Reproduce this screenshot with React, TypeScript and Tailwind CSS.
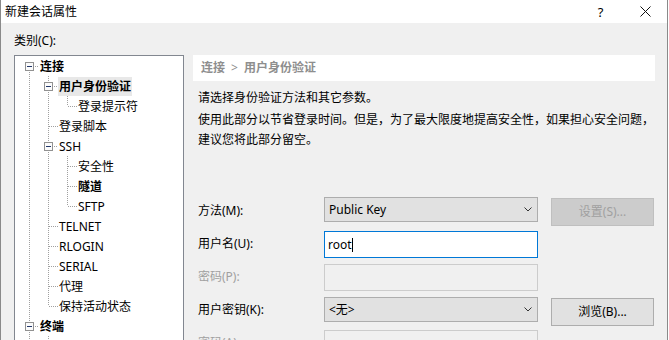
import React from 'react';

type Conn = 'F' | 'T' | 'L';
interface Row {
  guides: ('I' | ' ')[];
  conn: Conn;
  box?: boolean;
  text: string;
  bold?: boolean;
  sel?: boolean;
}

const rows: Row[] = [
  { guides: [], conn: 'F', box: true, text: '连接', bold: true },
  { guides: ['I'], conn: 'T', box: true, text: '用户身份验证', bold: true, sel: true },
  { guides: ['I', 'I'], conn: 'L', text: '登录提示符' },
  { guides: ['I'], conn: 'T', text: '登录脚本' },
  { guides: ['I'], conn: 'T', box: true, text: 'SSH' },
  { guides: ['I', 'I'], conn: 'T', text: '安全性' },
  { guides: ['I', 'I'], conn: 'T', text: '隧道', bold: true },
  { guides: ['I', 'I'], conn: 'L', text: 'SFTP' },
  { guides: ['I'], conn: 'T', text: 'TELNET' },
  { guides: ['I'], conn: 'T', text: 'RLOGIN' },
  { guides: ['I'], conn: 'T', text: 'SERIAL' },
  { guides: ['I'], conn: 'T', text: '代理' },
  { guides: ['I'], conn: 'L', text: '保持活动状态' },
  { guides: [], conn: 'T', box: true, text: '终端', bold: true },
  { guides: ['I'], conn: 'T', text: '' },
];

const DOT = '#a0a0a0';

function Guide({ kind }: { kind: 'I' | ' ' }) {
  return (
    <svg width="19" height="20" className="block shrink-0" shapeRendering="crispEdges">
      {kind === 'I' && (
        <line x1="9.5" y1="0" x2="9.5" y2="20" stroke={DOT} strokeDasharray="1 1" />
      )}
    </svg>
  );
}

function Connector({ conn, box }: { conn: Conn; box?: boolean }) {
  return (
    <svg width="19" height="20" className="block shrink-0" shapeRendering="crispEdges">
      {conn !== 'F' && <line x1="9.5" y1="0" x2="9.5" y2="10" stroke={DOT} strokeDasharray="1 1" />}
      {conn !== 'L' && <line x1="9.5" y1="10" x2="9.5" y2="20" stroke={DOT} strokeDasharray="1 1" />}
      <line x1={box ? 15 : 10} y1="10.5" x2="19" y2="10.5" stroke={DOT} strokeDasharray="1 1" />
      {box && (
        <>
          <rect x="5.5" y="6.5" width="8" height="8" fill="#fbfbfb" stroke="#919191" />
          <line x1="7" y1="10.5" x2="12" y2="10.5" stroke="#23386b" />
        </>
      )}
    </svg>
  );
}

function Chevron() {
  return (
    <svg width="8" height="5" className="block shrink-0" shapeRendering="geometricPrecision">
      <polyline points="0.5,0.5 4,4 7.5,0.5" fill="none" stroke="#333" strokeWidth="1" />
    </svg>
  );
}

export default function App() {
  return (
    <div className="w-[669px] h-[340px] overflow-hidden bg-white [font-family:'Noto_Sans','Noto_Sans_CJK_SC',sans-serif] text-[12px] text-black">
      <div className="w-[668px] h-[340px] border-l border-r border-[#8a8a8a] flex flex-col bg-[#f0f0f0]">
        {/* title bar */}
        <div className="h-[23px] shrink-0 bg-white flex items-center">
          <div className="pl-[4px] leading-[20px] text-[12px]">新建会话属性</div>
          <div className="flex-1" />
          <div className="w-[45px] h-[23px] flex items-center justify-center text-[13px] leading-[20px]">?</div>
          <div className="w-[44px] h-[23px] flex items-center justify-center">
            <svg width="11" height="11" className="block">
              <line x1="0.5" y1="0.5" x2="10.5" y2="10.5" stroke="#111" strokeWidth="1" />
              <line x1="10.5" y1="0.5" x2="0.5" y2="10.5" stroke="#111" strokeWidth="1" />
            </svg>
          </div>
        </div>

        {/* body */}
        <div className="flex-1 pl-[13px] pt-[8px]">
          <div className="leading-[20px]">类别(C):</div>
          <div className="mt-[4px] flex items-start">
            {/* tree */}
            <div className="w-[170px] h-[300px] shrink-0 border border-[#828790] bg-white overflow-hidden pl-[5px]">
              {rows.map((r, i) => (
                <div key={i} className="h-[20px] flex items-center">
                  {r.guides.map((g, j) => (
                    <Guide key={j} kind={g} />
                  ))}
                  <Connector conn={r.conn} box={r.box} />
                  {r.text && (
                    <span
                      className={
                        'px-[1px] leading-[19px] h-[19px] whitespace-nowrap ' +
                        (r.bold ? 'font-bold ' : '') +
                        (r.sel ? 'bg-[#e8e8e8]' : '')
                      }
                    >
                      {r.text}
                    </span>
                  )}
                </div>
              ))}
            </div>

            {/* right pane */}
            <div className="ml-[9px] w-[462px] flex flex-col">
              <div className="h-[26px] bg-white flex items-center px-[8px] font-bold text-[#8e8e8e]">
                <span>连接</span>
                <span className="mx-[6px] font-normal">&gt;</span>
                <span>用户身份验证</span>
              </div>
              <div className="pl-[5px] mt-[7px] leading-[20px]">请选择身份验证方法和其它参数。</div>
              <div className="pl-[5px] mt-[2px] leading-[20px]">
                使用此部分以节省登录时间。但是，为了最大限度地提高安全性，如果担心安全问题，
                <br />
                建议您将此部分留空。
              </div>

              {/* form */}
              <div className="mt-[45px] pl-[5px] flex flex-col">
                {/* method */}
                <div className="h-[33px] flex items-start">
                  <div className="w-[126px] mt-[6px] leading-[20px]">方法(M):</div>
                  <div className="mt-[2px] w-[214px] h-[25px] border border-[#adadad] bg-[#e1e1e1] flex items-center pl-[4px] pr-[5px]">
                    <span className="flex-1 leading-[20px]">Public Key</span>
                    <Chevron />
                  </div>
                  <div className="ml-[13px] mt-[3px] w-[103px] h-[28px] border border-[#bfbfbf] bg-[#cccccc] flex items-center justify-center text-[#a0a0a0]">
                    设置(S)...
                  </div>
                </div>
                {/* username */}
                <div className="h-[33px] flex items-start">
                  <div className="w-[126px] mt-[6px] leading-[20px]">用户名(U):</div>
                  <div className="mt-[3px] w-[214px] h-[27px] border border-[#0078d7] bg-white flex items-center pl-[3px]">
                    <span className="leading-[20px]">root</span>
                    <span className="w-px h-[14px] bg-black" />
                  </div>
                </div>
                {/* password */}
                <div className="h-[33px] flex items-start">
                  <div className="w-[126px] mt-[6px] leading-[20px] text-[#a0a0a0]">密码(P):</div>
                  <div className="mt-[3px] w-[214px] h-[27px] border border-[#cccccc] bg-[#f0f0f0]" />
                </div>
                {/* user key */}
                <div className="h-[33px] flex items-start">
                  <div className="w-[126px] mt-[6px] leading-[20px]">用户密钥(K):</div>
                  <div className="mt-[3px] w-[214px] h-[25px] border border-[#adadad] bg-[#e1e1e1] flex items-center pl-[4px] pr-[5px]">
                    <span className="flex-1 leading-[20px]">&lt;无&gt;</span>
                    <Chevron />
                  </div>
                  <div className="ml-[13px] mt-[4px] w-[103px] h-[28px] border border-[#adadad] bg-[#e1e1e1] flex items-center justify-center">
                    浏览(B)...
                  </div>
                </div>
                {/* passphrase */}
                <div className="h-[33px] flex items-start">
                  <div className="w-[126px] mt-[6px] leading-[20px] text-[#a0a0a0]">密码(A):</div>
                  <div className="mt-[3px] w-[214px] h-[27px] border border-[#cccccc] bg-[#f0f0f0]" />
                </div>
              </div>
            </div>
          </div>
        </div>
      </div>
    </div>
  );
}
